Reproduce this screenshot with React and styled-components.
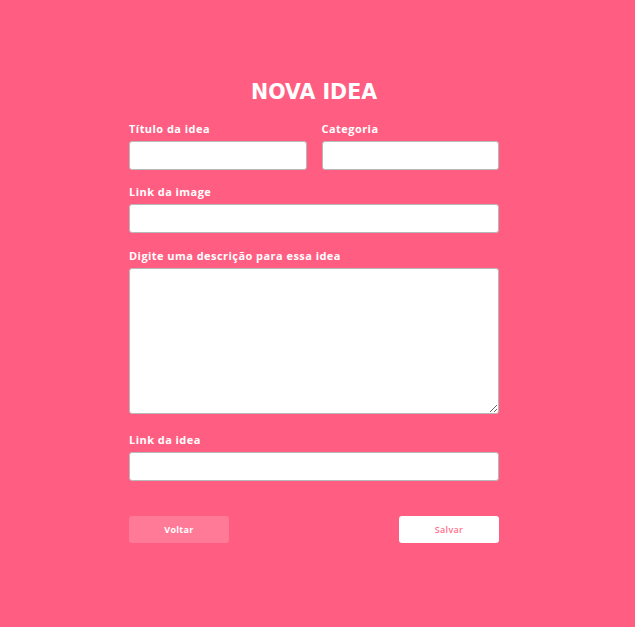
import React from "react";
import styled, { createGlobalStyle } from "styled-components";

const Global = createGlobalStyle`
  html, body { margin: 0; padding: 0; background: #ff5e82; }
  body { font-family: "Open Sans", "DejaVu Sans", sans-serif; }
  * { box-sizing: border-box; }
`;

const Page = styled.div`
  width: 635px;
  min-height: 627px;
  background: #ff5e82;
  display: flex;
  justify-content: center;
  padding: 78px 7px 0 0;
`;

const Form = styled.form`
  width: 370px;
  display: flex;
  flex-direction: column;
`;

const Title = styled.h1`
  margin: 0 0 16px;
  text-align: center;
  color: #fff;
  font-family: "DejaVu Sans", sans-serif;
  font-weight: 700;
  font-size: 20.5px;
  line-height: 28px;
`;

const Row = styled.div`
  display: grid;
  grid-template-columns: ${(p) => (p.$cols === 2 ? "minmax(0, 1fr) minmax(0, 1fr)" : "minmax(0, 1fr)")};
  column-gap: 15px;
  margin-bottom: ${(p) => p.$mb ?? 15}px;
`;

const Field = styled.label`
  display: flex;
  flex-direction: column;
  min-width: 0;
`;

const Label = styled.span`
  color: #fff;
  font-weight: 700;
  font-size: 11px;
  line-height: 14px;
  margin-bottom: 5px;
  letter-spacing: 0.45px;
`;

const Input = styled.input`
  width: 100%;
  height: 29px;
  border: 1px solid #b8b8b8;
  border-radius: 3px;
  background: #fff;
  outline: none;
  padding: 0 8px;
`;

const TextArea = styled.textarea`
  width: 100%;
  height: 146px;
  border: 1px solid #b8b8b8;
  border-radius: 3px;
  background: #fff;
  outline: none;
  padding: 6px 8px;
  resize: vertical;
  font-family: inherit;
  display: block;
`;

const Actions = styled.div`
  display: flex;
  justify-content: space-between;
  margin-top: 35px;
`;

const Button = styled.button`
  width: 100px;
  height: 27px;
  border: none;
  border-radius: 3px;
  font-family: "Open Sans", sans-serif;
  font-size: 9px;
  letter-spacing: 0.3px;
  cursor: pointer;
  background: ${(p) => (p.$primary ? "#fff" : "#ff7a96")};
  color: ${(p) => (p.$primary ? "#ff6f8e" : "#fff")};
  font-weight: ${(p) => (p.$primary ? 600 : 700)};
`;

export default function App() {
  return (
    <>
      <Global />
      <Page>
        <Form onSubmit={(e) => e.preventDefault()}>
          <Title>NOVA IDEA</Title>
          <Row $cols={2} $mb={15}>
            <Field>
              <Label>Título da idea</Label>
              <Input />
            </Field>
            <Field>
              <Label>Categoria</Label>
              <Input />
            </Field>
          </Row>
          <Row $mb={16}>
            <Field>
              <Label>Link da image</Label>
              <Input />
            </Field>
          </Row>
          <Row $mb={19}>
            <Field>
              <Label>Digite uma descrição para essa idea</Label>
              <TextArea />
            </Field>
          </Row>
          <Row $mb={0}>
            <Field>
              <Label>Link da idea</Label>
              <Input />
            </Field>
          </Row>
          <Actions>
            <Button type="button">Voltar</Button>
            <Button type="submit" $primary>Salvar</Button>
          </Actions>
        </Form>
      </Page>
    </>
  );
}
